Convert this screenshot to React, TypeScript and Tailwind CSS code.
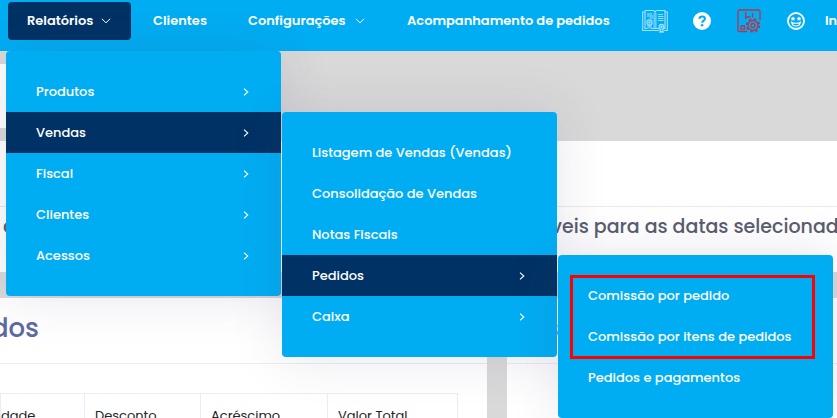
import React from 'react';

interface MenuEntry {
  label: string;
  active?: boolean;
  arrow?: boolean;
}

const reportMenu: MenuEntry[] = [
  { label: 'Produtos', arrow: true },
  { label: 'Vendas', arrow: true, active: true },
  { label: 'Fiscal', arrow: true },
  { label: 'Clientes', arrow: true },
  { label: 'Acessos', arrow: true },
];

const salesMenu: MenuEntry[] = [
  { label: 'Listagem de Vendas (Vendas)' },
  { label: 'Consolidação de Vendas' },
  { label: 'Notas Fiscais' },
  { label: 'Pedidos', arrow: true, active: true },
  { label: 'Caixa', arrow: true },
];

const ordersMenu: MenuEntry[] = [
  { label: 'Comissão por pedido' },
  { label: 'Comissão por itens de pedidos' },
  { label: 'Pedidos e pagamentos' },
];

const ChevronDown = () => (
  <svg className="w-[10px] h-[6px] shrink-0" viewBox="0 0 10 6" fill="none" stroke="currentColor" strokeWidth="1">
    <path d="M0.8 0.8L5 4.8L9.2 0.8" />
  </svg>
);

const ChevronRight = () => (
  <svg className="w-[6px] h-2 shrink-0" viewBox="0 0 6 8" fill="none" stroke="currentColor" strokeWidth="1.1">
    <path d="M1 0.6L4.8 4L1 7.4" />
  </svg>
);

const BookIcon = () => (
  <svg className="w-[26px] h-6" viewBox="0 0 26 24" fill="none" stroke="#a5e3fd" strokeWidth="1.1">
    <path d="M3 1.5H10.5Q13 1.5 13 3.5Q13 1.5 15.5 1.5H23V19.5H21.5M17.5 19.5H9M5 19.5H3V1.5" />
    <path d="M3 3H0.7V21.5H17M22 21.5H25.3V3H23" />
    <path d="M13 3.5V19.5M12 4V19M14 4V19" strokeWidth="0.7" />
    <path d="M5 5H10M5 7H11M7.5 9H11" />
    <path d="M16 5.5H21M16 7.5H21.5M16 9.5H21.5M16 11.5H21.5" strokeWidth="0.9" />
    <circle cx="7.5" cy="13.5" r="2.6" />
    <circle cx="7.5" cy="13.5" r="0.8" />
    <path d="M6 16V20M9 16V20M7.5 16.5V19" strokeWidth="0.9" />
    <circle cx="19.5" cy="17.8" r="2.4" />
    <circle cx="19.5" cy="17.8" r="0.7" />
    <path d="M18 20V23.5L19.5 22.3L21 23.5V20" />
  </svg>
);

const HelpIcon = () => (
  <svg className="w-[18px] h-[18px]" viewBox="0 0 18 18" fill="none">
    <circle cx="9" cy="9" r="9" fill="white" />
    <path d="M6.3 6.9C6.5 5.2 7.5 4.4 9.1 4.4C10.7 4.4 11.9 5.3 11.9 6.7C11.9 8.8 9.2 8.5 9.2 10.7" stroke="#00adf3" strokeWidth="2" />
    <circle cx="9.1" cy="13.2" r="1.3" fill="#00adf3" />
  </svg>
);

const BoxGearIcon = () => (
  <svg className="w-6 h-6" viewBox="0 0 24 24" fill="none" stroke="#b5344f" strokeWidth="1.3">
    <path d="M10 22.5H2.5Q1 22.5 1 21V2.5Q1 1 2.5 1H21.5Q23 1 23 2.5V11" />
    <path d="M8.7 3V9.3L10.5 8H13.5M15.5 4V8.5" />
    <path d="M4 17H7.5V20.2H4Z" />
    <circle cx="16" cy="16.5" r="5" />
    <circle cx="16" cy="16.5" r="6.3" strokeWidth="1.8" strokeDasharray="2.47 2.48" />
    <circle cx="16" cy="16.5" r="2" />
  </svg>
);

const SmileIcon = () => (
  <svg className="w-[18px] h-[18px]" viewBox="0 0 18 18" fill="none">
    <circle cx="9" cy="9" r="8" stroke="white" strokeWidth="1.8" />
    <path d="M6 4.4L6.8 5.8L8.4 6L7.2 7.2L7.5 8.7L6 8L4.5 8.7L4.8 7.2L3.6 6L5.2 5.8Z" fill="white" />
    <path d="M12 4.4L12.8 5.8L14.4 6L13.2 7.2L13.5 8.7L12 8L10.5 8.7L10.8 7.2L9.6 6L11.2 5.8Z" fill="white" />
    <path d="M4.8 10.5C6 11.5 12 11.5 13.2 10.5C13 12.8 11.2 14 9 14C6.8 14 5 12.8 4.8 10.5Z" stroke="white" strokeWidth="1.2" />
  </svg>
);

const SubMenu: React.FC<{ items: MenuEntry[] }> = ({ items }) => (
  <ul className="w-[275px] py-5 rounded bg-[#00adf3] text-white shadow-[0_0_50px_rgba(82,63,105,0.15)]">
    {items.map((item) => (
      <li key={item.label}>
        <button
          type="button"
          className={`flex w-full h-[41px] items-center justify-between pl-[30px] pr-8 text-[13px] font-medium whitespace-nowrap ${item.active ? 'bg-[#003265]' : ''}`}
        >
          {item.label}
          {item.arrow && <ChevronRight />}
        </button>
      </li>
    ))}
  </ul>
);

const iconButton = 'flex w-9 h-9 items-center justify-center rounded';

const Header = () => (
  <header className="flex h-[51px] items-start gap-[11px] bg-[#00adf3] pl-2 pt-[2px] text-[13px] font-semibold text-white whitespace-nowrap overflow-hidden">
    <nav className="flex shrink-0 gap-[3px]">
      <button type="button" className="flex w-[123px] h-[38px] items-center justify-between rounded bg-[#003265] pl-[19px] pr-5">
        Relatórios
        <ChevronDown />
      </button>
      <a href="#clientes" className="flex w-[92px] h-[38px] items-center pl-[19px]">Clientes</a>
      <button type="button" className="flex w-[156px] h-[38px] items-center justify-between pl-[19px] pr-5">
        Configurações
        <ChevronDown />
      </button>
      <a href="#acompanhamento" className="flex w-[238px] h-[38px] items-center pl-[19px]">Acompanhamento de pedidos</a>
    </nav>
    <div className="flex shrink-0 h-[38px] items-center gap-[11px]">
      <button type="button" aria-label="Manual" className={iconButton}><BookIcon /></button>
      <button type="button" aria-label="Ajuda" className={iconButton}><HelpIcon /></button>
      <button type="button" aria-label="Estoque" className={iconButton}><BoxGearIcon /></button>
      <button type="button" aria-label="Humor" className={iconButton}><SmileIcon /></button>
      <span>Inf</span>
    </div>
  </header>
);

const cell = 'border border-[#ebedf2] pt-3 h-12 align-top font-normal';

const Dashboard = () => (
  <main className="overflow-hidden pt-[13px] whitespace-nowrap">
    <div className="h-16 w-[270px] bg-white" />

    <section className="mt-[13px] h-[131px] bg-white">
      <div className="h-[66px] border-b border-[#e8e8f3]" />
      <div className="flex pt-1 text-[19px] font-medium leading-8 text-[#595d6e]">
        <span className="w-[551px] shrink-0 pl-[3px]">c</span>
        <span>veis para as datas selecionadas</span>
      </div>
    </section>

    <div className="mt-[26px] flex gap-5">
      <section className="w-[487px] shrink-0 bg-white">
        <div className="h-[66px] border-b border-[#ebedf2] pt-3">
          <h2 className="flex w-[39px] justify-end text-[26px] leading-9 font-medium text-[#5d6aa0]">dos</h2>
        </div>
        <div className="flex justify-end pt-[29px] pr-[29px]">
          <table className="w-[458px] shrink-0 table-fixed border-collapse text-[13px] leading-5 text-[#212529]">
            <thead>
              <tr>
                <th className={`${cell} w-[84px] pr-[50px] text-right`}>dade</th>
                <th className={`${cell} w-[116px] pl-[10px] text-left`}>Desconto</th>
                <th className={`${cell} w-[127px] pl-[10px] text-left`}>Acréscimo</th>
                <th className={`${cell} w-[130px] pl-[10px] text-left`}>Valor Total</th>
              </tr>
            </thead>
          </table>
        </div>
      </section>
      <section className="grow bg-white">
        <div className="h-[66px] border-b border-[#ebedf2] pt-3">
          <h2 className="flex w-[52px] justify-end text-[26px] leading-9 font-medium text-[#5d6aa0]">s</h2>
        </div>
      </section>
    </div>
  </main>
);

export default function App() {
  return (
    <div className="relative min-h-screen overflow-hidden bg-[#d9d9d9] font-['Poppins','Inter',sans-serif]">
      <Header />
      <Dashboard />

      {/* Cascading menus, each opens beside its parent entry */}
      <div className="absolute left-[6px] top-[51px]">
        <SubMenu items={reportMenu} />
      </div>
      <div className="absolute left-[282px] top-28">
        <SubMenu items={salesMenu} />
      </div>
      <div className="absolute left-[558px] top-[255px]">
        <SubMenu items={ordersMenu} />
        <div className="pointer-events-none absolute left-3 top-5 h-[84px] w-[245px] border-3 border-[#ff0000]" />
      </div>
    </div>
  );
}
